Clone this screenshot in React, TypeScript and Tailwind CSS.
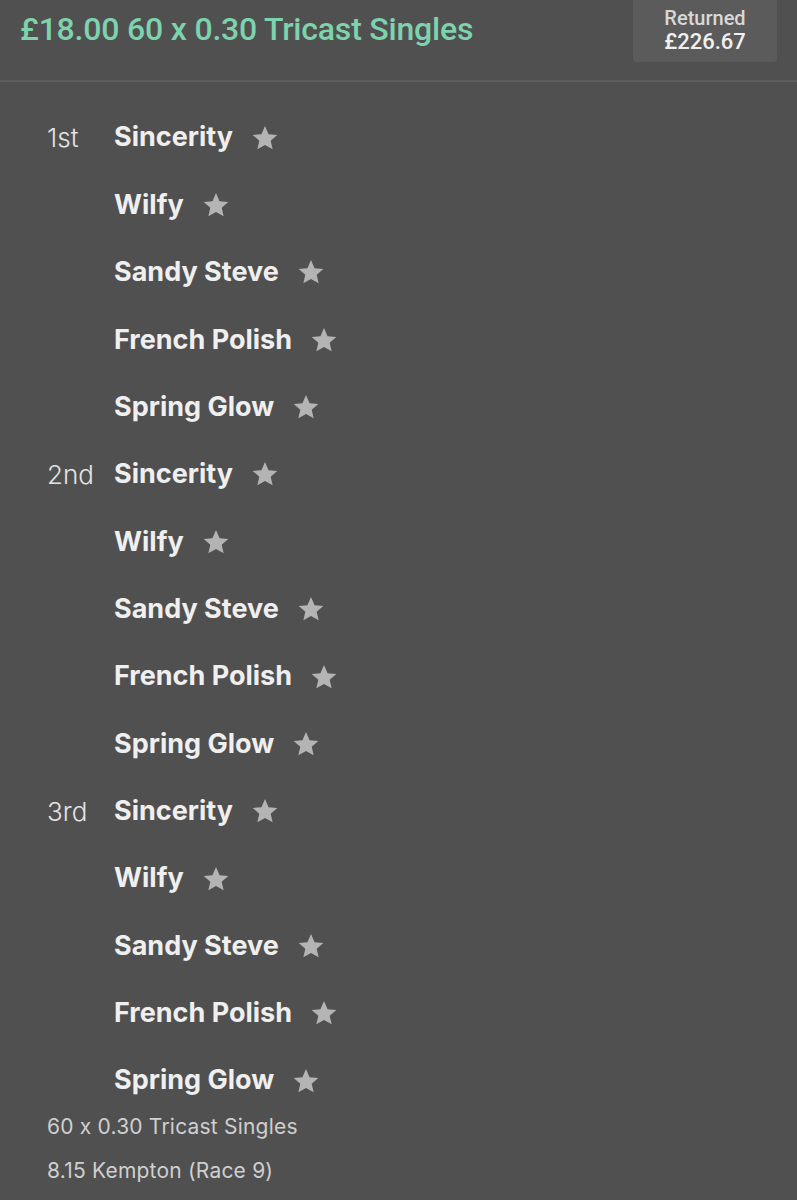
import React from 'react';

const horses = ['Sincerity', 'Wilfy', 'Sandy Steve', 'French Polish', 'Spring Glow'];
const places = ['1st', '2nd', '3rd'];

const Star = () => (
  <svg viewBox="0 0 24 24" className="w-[28px] h-[28px] shrink-0" fill="#b4b4b4">
    <path d="M12 1.8l3.05 6.9 7.5.7-5.67 4.98 1.68 7.36L12 17.9l-6.56 3.84 1.68-7.36L1.45 9.4l7.5-.7z" />
  </svg>
);

const Row = ({ place, name }: { place?: string; name: string }) => (
  <div className="flex items-center h-[67.36px]">
    <div className="w-[67px] text-[26px] font-light text-[#e4e4e4]">{place}</div>
    <div className="flex items-center gap-[18px]">
      <span className="text-[27px] font-bold text-[#efefef]">{name}</span>
      <Star />
    </div>
  </div>
);

export default function App() {
  return (
    <div
      className="w-[797px] h-[1200px] bg-[#505050] overflow-hidden [font-feature-settings:'calt'_0]"
      style={{ fontFamily: 'Inter, "Liberation Sans", sans-serif' }}
    >
      <div className="flex items-start justify-between h-[82px] border-b-2 border-[#5d5d5d] pl-[20px] pr-[20px]">
        <h1
          className="mt-[5px] text-[32px] font-medium text-[#7dd3ad] tracking-[-0.2px]"
          style={{ fontFamily: 'Roboto, sans-serif' }}
        >
          £18.00 60 x 0.30 Tricast Singles
        </h1>
        <div
          className="w-[144px] h-[62px] rounded-b-[4px] bg-[#5b5b5b] flex flex-col items-center justify-center leading-[24px] font-medium pb-[2px]"
          style={{ fontFamily: 'Roboto, sans-serif' }}
        >
          <span className="text-[20px] text-[#d8d8d8]">Returned</span>
          <span className="text-[22px] text-[#f0f0f0]">£226.67</span>
        </div>
      </div>

      <div className="pt-[22px] pl-[47px]">
        {places.map((p) =>
          horses.map((h, i) => <Row key={p + h} place={i === 0 ? p : undefined} name={h} />)
        )}
        <div className="text-[21px] text-[#cfcfcf] leading-[44px] -mt-[9px] tracking-[0.2px]">
          <div>60 x 0.30 Tricast Singles</div>
          <div>8.15 Kempton (Race 9)</div>
        </div>
      </div>
    </div>
  );
}
